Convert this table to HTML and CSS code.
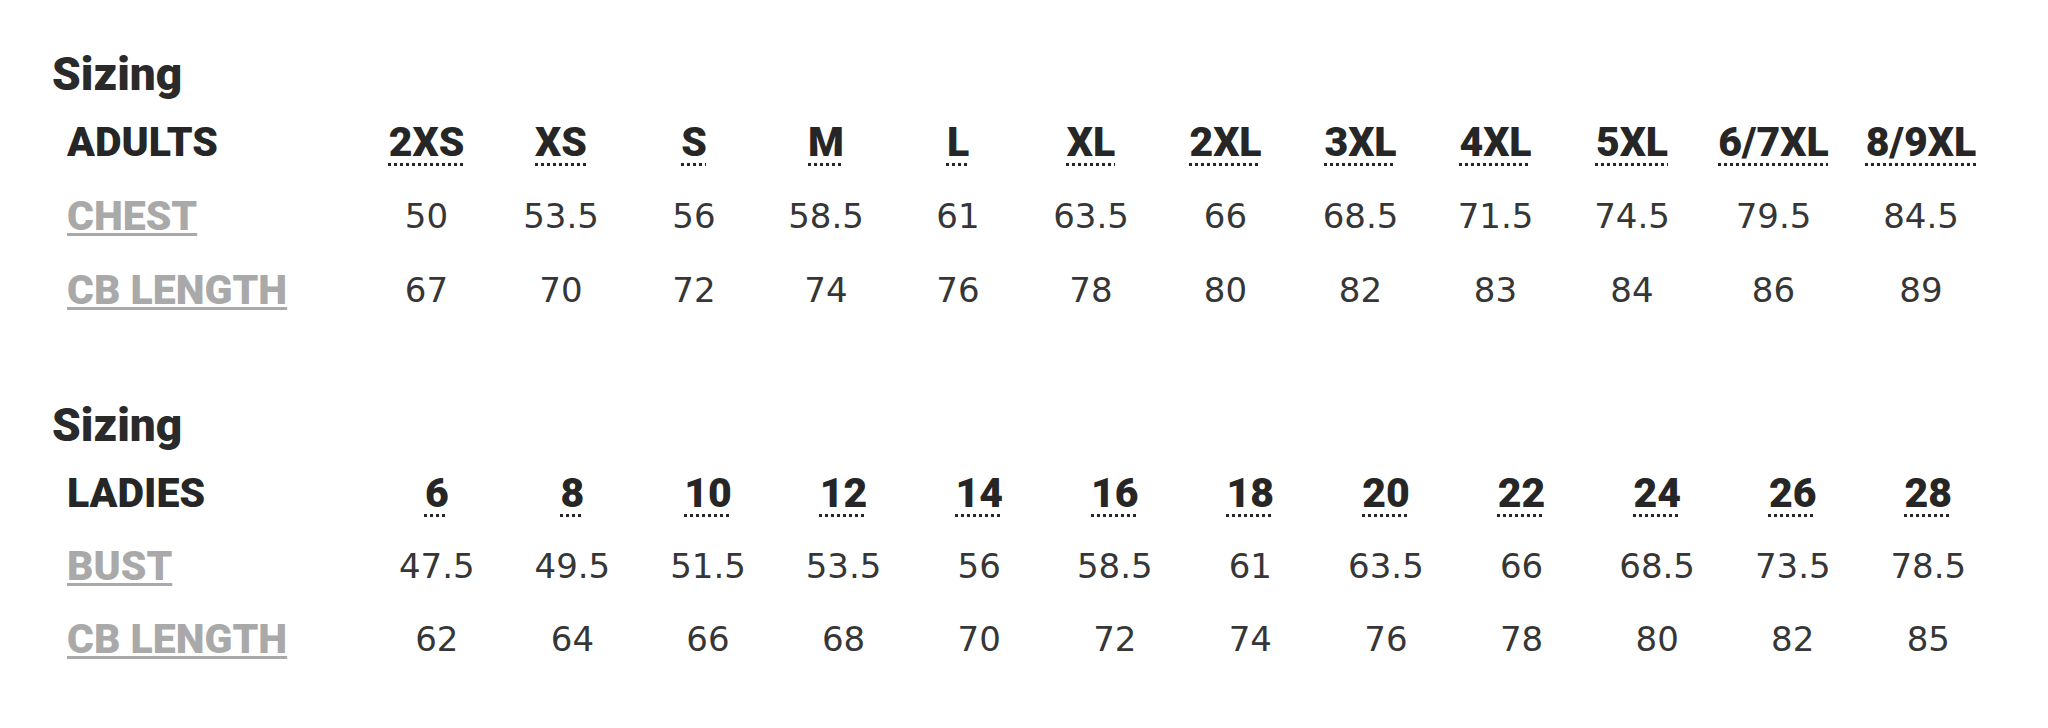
FILE: index.html
```html
<!DOCTYPE html>
<html lang="en">
<head>
<meta charset="utf-8">
<title>Sizing</title>
<link rel="stylesheet" href="styles.css">
</head>
<body>
<main class="page">
  <section class="sizing sizing-adults">
    <h2 class="sizing-title">Sizing</h2>
    <div class="size-grid grid-adults">
      <div class="cell label head">ADULTS</div>
      <div class="cell size"><abbr>2XS</abbr></div>
      <div class="cell size"><abbr>XS</abbr></div>
      <div class="cell size"><abbr>S</abbr></div>
      <div class="cell size"><abbr>M</abbr></div>
      <div class="cell size"><abbr>L</abbr></div>
      <div class="cell size"><abbr>XL</abbr></div>
      <div class="cell size"><abbr>2XL</abbr></div>
      <div class="cell size"><abbr>3XL</abbr></div>
      <div class="cell size"><abbr>4XL</abbr></div>
      <div class="cell size"><abbr>5XL</abbr></div>
      <div class="cell size"><abbr>6/7XL</abbr></div>
      <div class="cell size"><abbr>8/9XL</abbr></div>

      <div class="cell label measure"><a>CHEST</a></div>
      <div class="cell value">50</div>
      <div class="cell value">53.5</div>
      <div class="cell value">56</div>
      <div class="cell value">58.5</div>
      <div class="cell value">61</div>
      <div class="cell value">63.5</div>
      <div class="cell value">66</div>
      <div class="cell value">68.5</div>
      <div class="cell value">71.5</div>
      <div class="cell value">74.5</div>
      <div class="cell value">79.5</div>
      <div class="cell value">84.5</div>

      <div class="cell label measure"><a>CB LENGTH</a></div>
      <div class="cell value">67</div>
      <div class="cell value">70</div>
      <div class="cell value">72</div>
      <div class="cell value">74</div>
      <div class="cell value">76</div>
      <div class="cell value">78</div>
      <div class="cell value">80</div>
      <div class="cell value">82</div>
      <div class="cell value">83</div>
      <div class="cell value">84</div>
      <div class="cell value">86</div>
      <div class="cell value">89</div>
    </div>
  </section>

  <section class="sizing sizing-ladies">
    <h2 class="sizing-title">Sizing</h2>
    <div class="size-grid grid-ladies">
      <div class="cell label head">LADIES</div>
      <div class="cell size"><abbr>6</abbr></div>
      <div class="cell size"><abbr>8</abbr></div>
      <div class="cell size"><abbr>10</abbr></div>
      <div class="cell size"><abbr>12</abbr></div>
      <div class="cell size"><abbr>14</abbr></div>
      <div class="cell size"><abbr>16</abbr></div>
      <div class="cell size"><abbr>18</abbr></div>
      <div class="cell size"><abbr>20</abbr></div>
      <div class="cell size"><abbr>22</abbr></div>
      <div class="cell size"><abbr>24</abbr></div>
      <div class="cell size"><abbr>26</abbr></div>
      <div class="cell size"><abbr>28</abbr></div>

      <div class="cell label measure"><a>BUST</a></div>
      <div class="cell value">47.5</div>
      <div class="cell value">49.5</div>
      <div class="cell value">51.5</div>
      <div class="cell value">53.5</div>
      <div class="cell value">56</div>
      <div class="cell value">58.5</div>
      <div class="cell value">61</div>
      <div class="cell value">63.5</div>
      <div class="cell value">66</div>
      <div class="cell value">68.5</div>
      <div class="cell value">73.5</div>
      <div class="cell value">78.5</div>

      <div class="cell label measure"><a>CB LENGTH</a></div>
      <div class="cell value">62</div>
      <div class="cell value">64</div>
      <div class="cell value">66</div>
      <div class="cell value">68</div>
      <div class="cell value">70</div>
      <div class="cell value">72</div>
      <div class="cell value">74</div>
      <div class="cell value">76</div>
      <div class="cell value">78</div>
      <div class="cell value">80</div>
      <div class="cell value">82</div>
      <div class="cell value">85</div>
    </div>
  </section>
</main>
</body>
</html>
```

FILE: styles.css
```css
html, body {
  margin: 0;
  padding: 0;
  background: #ffffff;
}

.page {
  padding: 46px 0 0 52px;
  font-family: Roboto, "Liberation Sans", sans-serif;
  color: #2b2b2b;
}

.sizing-ladies {
  margin-top: 70px;
}

.sizing-title {
  margin: 0 0 3px 0;
  font-family: Roboto, "Liberation Sans", sans-serif;
  font-weight: 900;
  font-size: 46px;
  line-height: 56px;
  color: #2a2a2a;
}

.size-grid {
  display: grid;
  grid-auto-rows: 74px;
  align-items: center;
}

.grid-adults {
  grid-template-columns: 307px 135px 134px 132px 132px 132px 134px 135px 135px 135px 138px 145px 150px;
}

.grid-ladies {
  grid-auto-rows: 73px;
  grid-template-columns: 317px repeat(12, 135.6px);
}

.cell {
  white-space: nowrap;
}

.label {
  padding-left: 15px;
  font-family: Roboto, "Liberation Sans", sans-serif;
  font-weight: 900;
  font-size: 41px;
  line-height: 48px;
}

.head {
  color: #262626;
}

.measure a {
  color: #a9a9a9;
  text-decoration: underline solid #a9a9a9;
  text-decoration-thickness: 3px;
  text-underline-offset: 3px;
}

.size {
  text-align: center;
  font-family: Roboto, "Liberation Sans", sans-serif;
  font-weight: 900;
  font-size: 41px;
  line-height: 48px;
  color: #262626;
}

.size abbr {
  text-decoration: underline dotted #262626;
  text-decoration-thickness: 3px;
  text-underline-offset: 7px;
}

.value {
  text-align: center;
  font-family: "DejaVu Sans", "Liberation Sans", sans-serif;
  font-weight: 400;
  font-size: 34px;
  line-height: 44px;
  color: #363636;
}
```
